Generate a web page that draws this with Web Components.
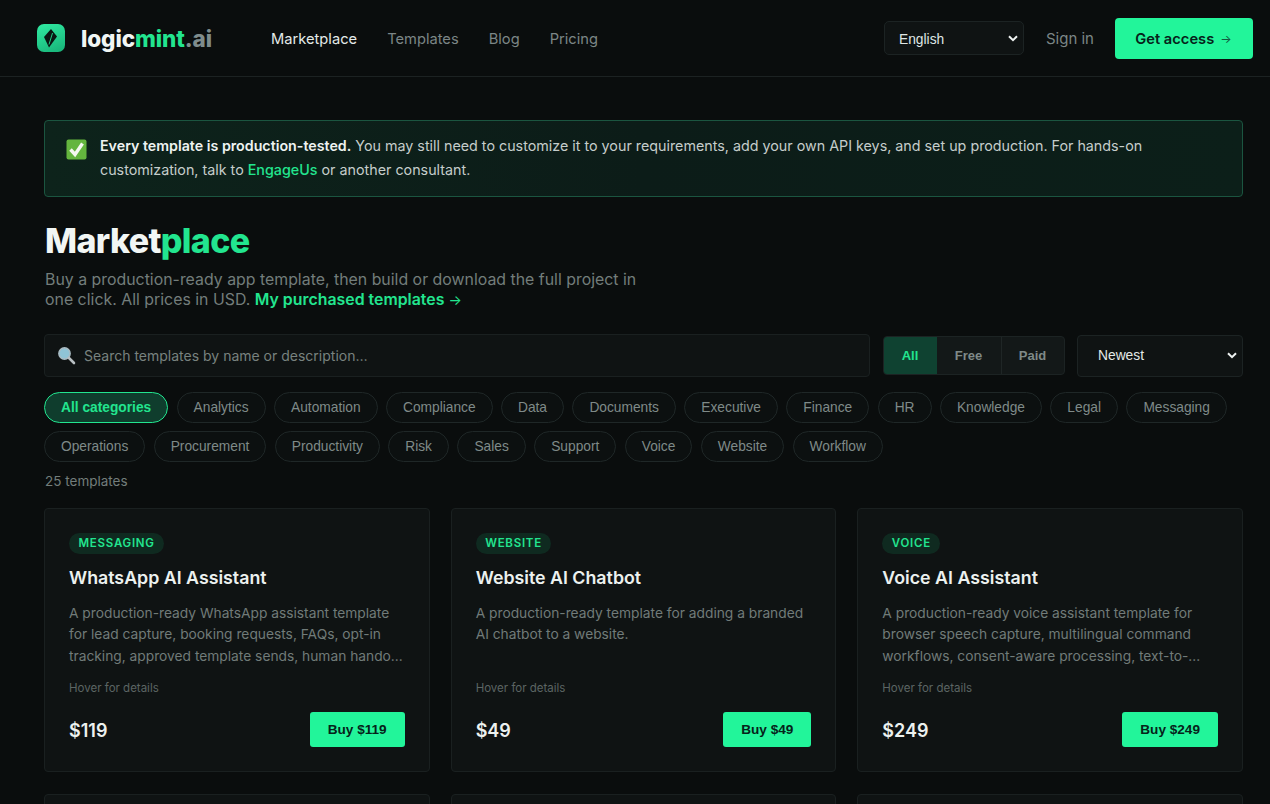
<!DOCTYPE html>
<html lang="en">
<head>
<meta charset="utf-8">
<title>Marketplace</title>
<style>
  html, body { margin: 0; height: 804px; overflow: hidden; background: #0a0d0d; }
  body { font-family: Inter, "Liberation Sans", sans-serif; color: #e8eeec; }
</style>
</head>
<body>
<site-header></site-header>
<market-page></market-page>

<script>
class SiteHeader extends HTMLElement {
  constructor() {
    super()
    this.attachShadow({ mode: "open" })
  }
  connectedCallback() {
    this.shadowRoot.innerHTML = `
      <style>
        :host { display: flex; align-items: center; height: 76px; border-bottom: 1px solid #1c2222; padding: 0 17px 0 37px; font-family: Inter, sans-serif; }
        .logo { display: flex; align-items: center; gap: 16px; width: 234px; }
        .word { font: 800 22.5px Inter, sans-serif; letter-spacing: -0.1px; color: #f1f6f4; }
        .word b { font-weight: 800; color: #22e58f; }
        .word i { font-style: normal; color: #7f8c8c; }
        nav { display: flex; gap: 30px; margin-top: 1px; font-size: 14.7px; color: #7c8686; }
        nav .on { color: #e4eae8; }
        .right { margin-left: auto; display: flex; align-items: center; }
        .lang { box-sizing: border-box; width: 140px; height: 34px; margin: 0 22px 0 0; padding: 0 5px 0 14px; display: flex; align-items: center; justify-content: space-between; background: #0f1313; border: 1px solid #1c2323; border-radius: 5px; font: 13.8px "Liberation Sans", sans-serif; color: #dfe6e4; }
        .lang span { padding-top: 2px; }
        .sign { font-size: 15px; margin: 1px 21px 0 0; color: #7c8686; }
        .cta { box-sizing: border-box; width: 138px; height: 41px; padding: 1px 1px 0 0; display: flex; align-items: center; justify-content: center; gap: 6px; background: #22f59a; border-radius: 4px; font-size: 14.7px; font-weight: 600; color: #06231a; }
        .cta span { font-size: 12px; font-weight: 400; color: #14573f; }
      </style>
      <div class="logo">
        <svg width="28" height="28" viewBox="0 0 28 28">
          <defs><linearGradient id="g" x1="0.2" y1="0" x2="0.6" y2="1"><stop offset="0" stop-color="#2fe8a0"/><stop offset="1" stop-color="#1ab87c"/></linearGradient></defs>
          <rect width="28" height="28" rx="7" fill="url(#g)"/>
          <path d="M14 5 L20 12.5 L12 23.5 L7 13 Z" fill="#0a1512"/>
          <path d="M15.5 9 L12 20.5" stroke="#22c985" stroke-width="1"/>
        </svg>
        <span class="word">logic<b>mint</b><i>.ai</i></span>
      </div>
      <nav>
        <span class="on">Marketplace</span><span>Templates</span><span>Blog</span><span>Pricing</span>
      </nav>
      <div class="right">
        <div class="lang"><span>English</span><select-chevron></select-chevron></div>
        <span class="sign">Sign in</span>
        <div class="cta">Get access <span>→</span></div>
      </div>`
  }
}

class SelectChevron extends HTMLElement {
  constructor() {
    super()
    this.attachShadow({ mode: "open" })
    this.shadowRoot.innerHTML = `
      <style>:host { display: inline-flex; }</style>
      <svg width="10" height="7" viewBox="0 0 10 7"><path d="M1 1.2 L5 5.2 L9 1.2" fill="none" stroke="#eef2f1" stroke-width="2"/></svg>`
  }
}

class NoticeBox extends HTMLElement {
  constructor() {
    super()
    this.attachShadow({ mode: "open" })
    this.shadowRoot.innerHTML = `
      <style>
        :host { display: flex; gap: 13px; box-sizing: border-box; height: 77px; padding: 13px 20px 0 21px; background: linear-gradient(90deg, #0d231b, #0c1c18 50%, #0c1f19); border: 1px solid #1b5540; border-radius: 4px; font-size: 14.3px; line-height: 24px; color: #c5cdcb; }
        .tick { flex: none; width: 21px; }
        svg { display: block; margin-top: 5px; }
      </style>
      <div class="tick">
        <svg width="21" height="21" viewBox="0 0 21 21"><rect x="0.5" y="0.5" width="20" height="20" rx="2" fill="#64b53e"/><path d="M4.5 10.5 L9 15.5 L16.5 4.5" fill="none" stroke="#f4f8f0" stroke-width="3.4"/></svg>
      </div>
      <div><slot></slot></div>`
  }
}

class SearchBox extends HTMLElement {
  constructor() {
    super()
    this.attachShadow({ mode: "open" })
    this.shadowRoot.innerHTML = `
      <style>
        :host { display: flex; align-items: center; gap: 8px; flex: 1; box-sizing: border-box; height: 43px; padding: 0 12px; background: #0f1313; border: 1px solid #1a2020; border-radius: 4px; font: 14px Inter, sans-serif; color: #78827f; }
        svg { flex: none; }
      </style>
      <svg width="19" height="19" viewBox="0 0 19 19">
        <circle cx="7.5" cy="7.5" r="5.6" fill="#8fc4d6" stroke="#a9bcc4" stroke-width="1.6"/>
        <path d="M12 12 L17 17" stroke="#b8bfc2" stroke-width="2.6" stroke-linecap="round"/>
      </svg>
      <span>Search templates by name or description…</span>`
  }
}

class PriceToggle extends HTMLElement {
  constructor() {
    super()
    this.attachShadow({ mode: "open" })
    this.shadowRoot.innerHTML = `
      <style>
        :host { display: flex; box-sizing: border-box; height: 39px; width: 182px; background: #131818; border: 1px solid #1c2323; border-radius: 4px; overflow: hidden; font: 700 13px "Liberation Sans", sans-serif; color: #7f8a88; }
        span { display: flex; align-items: center; justify-content: center; border-right: 1px solid #1f2626; }
        span:last-child { border-right: 0; flex: 1; }
        .on { width: 53px; background: #0f4231; color: #22e58f; border-right: 0; }
        .free { width: 64px; }
      </style>
      <span class="on">All</span><span class="free">Free</span><span>Paid</span>`
  }
}

class SortSelect extends HTMLElement {
  constructor() {
    super()
    this.attachShadow({ mode: "open" })
    this.shadowRoot.innerHTML = `
      <style>
        :host { display: flex; align-items: center; justify-content: space-between; box-sizing: border-box; width: 166px; height: 42px; padding: 0 5px 0 20px; background: #0f1313; border: 1px solid #1c2323; border-radius: 4px; font: 13.8px "Liberation Sans", sans-serif; color: #e3e9e7; }
      </style>
      <span>Newest</span><select-chevron></select-chevron>`
  }
}

class FilterPill extends HTMLElement {
  constructor() {
    super()
    this.attachShadow({ mode: "open" })
    this.shadowRoot.innerHTML = `
      <style>
        :host { display: inline-flex; align-items: center; box-sizing: border-box; height: 31px; padding: 0 16px; border: 1px solid #1f2727; border-radius: 16px; background: #0c1010; font: 13.75px "Liberation Sans", sans-serif; color: #7f8a88; white-space: nowrap; }
        :host([active]) { background: #0f3d2d; border-color: #22e58f; color: #22e58f; font-weight: 700; }
      </style>
      <slot></slot>`
  }
}

class TemplateCard extends HTMLElement {
  connectedCallback() {
    const tag = this.getAttribute("tag")
    const name = this.getAttribute("name")
    const price = this.getAttribute("price")
    this.attachShadow({ mode: "open" })
    const body = name ? `
      <span class="tag">${tag}</span>
      <h3>${name}</h3>
      <p><slot></slot></p>
      <div class="hint">Hover for details</div>
      <div class="foot"><span class="price">$${price}</span><span class="buy">Buy $${price}</span></div>` : ""
    this.shadowRoot.innerHTML = `
      <style>
        :host { display: flex; flex-direction: column; box-sizing: border-box; height: 264px; padding: 24px; background: #0f1313; border: 1px solid #1a2020; border-radius: 4px; }
        .tag { align-self: flex-start; height: 21px; line-height: 21px; padding: 0 9.5px; border-radius: 11px; background: #0f2a20; color: #22e58f; font-size: 11.5px; font-weight: 600; letter-spacing: 0.75px; }
        h3 { margin: 12px 0 0; font-size: 17.8px; line-height: 24px; font-weight: 600; color: #ecf1ef; }
        p { margin: 13px 0 0; height: 63px; font-size: 13.77px; line-height: 21.3px; color: #717b79; }
        .hint { margin-top: 15px; font-size: 11.5px; line-height: 14px; color: #5c6563; }
        .foot { margin-top: auto; display: flex; align-items: center; justify-content: space-between; }
        .price { margin-top: 1px; font-size: 18px; font-weight: 600; color: #ecf1ef; }
        .buy { height: 35px; padding: 0 18px; display: flex; align-items: center; background: #22f59a; border-radius: 3px; font: 700 13.6px "Liberation Sans", sans-serif; color: #06231a; }
      </style>${body}`
  }
}

class MarketPage extends HTMLElement {
  constructor() {
    super()
    this.attachShadow({ mode: "open" })
  }
  connectedCallback() {
    const cats = ["Analytics", "Automation", "Compliance", "Data", "Documents", "Executive", "Finance", "HR", "Knowledge", "Legal", "Messaging", "Operations", "Procurement", "Productivity", "Risk", "Sales", "Support", "Voice", "Website", "Workflow"]
    const pills = cats.map(c => `<filter-pill>${c}</filter-pill>`).join("")
    this.shadowRoot.innerHTML = `
      <style>
        :host { display: block; padding: 43px 27px 0 44px; }
        a { text-decoration: none; }
        notice-box b { color: #eef3f1; font-size: 14.24px; font-weight: 600; }
        notice-box a { color: #22e58f; font-weight: 500; }
        h1 { margin: 24px 0 0 1px; font-size: 34px; line-height: 40px; font-weight: 800; letter-spacing: -0.65px; color: #f2f6f4; }
        h1 span { color: #22e58f; }
        .sub { margin: 9px 0 0 1px; width: 600px; font-size: 15.88px; line-height: 20px; color: #737d7b; }
        .sub a { color: #22e58f; font-weight: 600; }
        .tools { display: flex; align-items: center; margin-top: 24px; gap: 12.5px; }
        .pills { display: flex; flex-wrap: wrap; gap: 8px 8.4px; margin-top: 15px; }
        .count { margin: 11px 0 0 1px; font-size: 13.5px; line-height: 16px; color: #737d7b; }
        .grid { display: grid; grid-template-columns: repeat(3, 1fr); gap: 22px 21px; margin-top: 19px; }
        .arrow { font-size: 14px; font-weight: 400; }
      </style>
      <notice-box><b>Every template is production-tested.</b> You may still need to customize it to your requirements, add your own API keys, and set up production. For hands-on customization, talk to <a>EngageUs</a> or another consultant.</notice-box>
      <h1>Market<span>place</span></h1>
      <p class="sub">Buy a production-ready app template, then build or download the full project in one click. All prices in USD. <a>My purchased templates <span class="arrow">→</span></a></p>
      <div class="tools">
        <search-box></search-box>
        <price-toggle></price-toggle>
        <sort-select></sort-select>
      </div>
      <div class="pills"><filter-pill active>All categories</filter-pill>${pills}</div>
      <div class="count">25 templates</div>
      <div class="grid">
        <template-card tag="MESSAGING" name="WhatsApp AI Assistant" price="119">A production-ready WhatsApp assistant template for lead capture, booking requests, FAQs, opt-in tracking, approved template sends, human hando...</template-card>
        <template-card tag="WEBSITE" name="Website AI Chatbot" price="49">A production-ready template for adding a branded AI chatbot to a website.</template-card>
        <template-card tag="VOICE" name="Voice AI Assistant" price="249">A production-ready voice assistant template for browser speech capture, multilingual command workflows, consent-aware processing, text-to-...</template-card>
        <template-card></template-card>
        <template-card></template-card>
        <template-card></template-card>
      </div>`
  }
}

customElements.define("select-chevron", SelectChevron)
customElements.define("site-header", SiteHeader)
customElements.define("notice-box", NoticeBox)
customElements.define("search-box", SearchBox)
customElements.define("price-toggle", PriceToggle)
customElements.define("sort-select", SortSelect)
customElements.define("filter-pill", FilterPill)
customElements.define("template-card", TemplateCard)
customElements.define("market-page", MarketPage)
</script>
</body>
</html>
